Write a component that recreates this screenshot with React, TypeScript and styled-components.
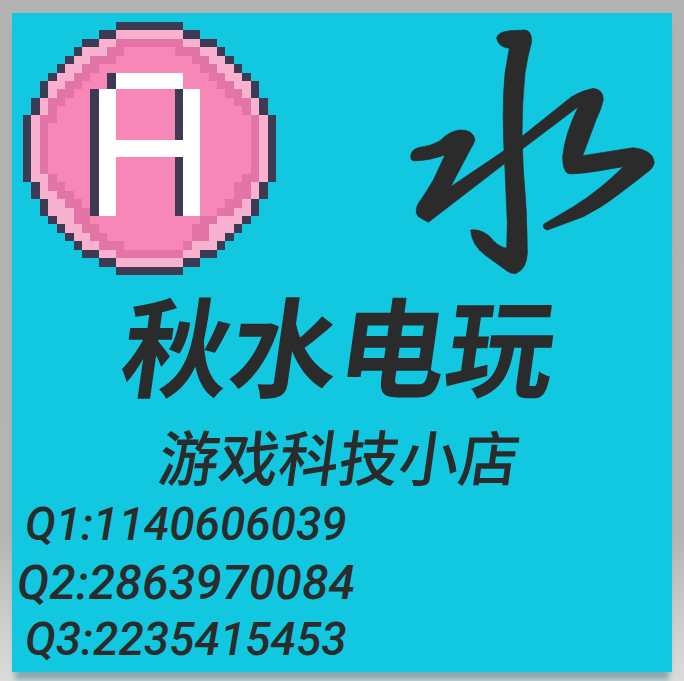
import * as React from "react";
import styled, { createGlobalStyle } from "styled-components";

const GlobalStyle = createGlobalStyle`
  html, body {
    margin: 0;
    padding: 0;
    width: 684px;
    height: 681px;
    overflow: hidden;
  }
`;

const Page = styled.div`
  width: 684px;
  height: 681px;
  box-sizing: border-box;
  padding: 13px 12px 9px;
  overflow: hidden;
  background: linear-gradient(180deg, #b3b3b3 0%, #b4b4b3 78%, #cfd0ce 92%, #dcdddb 100%);
`;

const Poster = styled.div`
  width: 660px;
  height: 659px;
  background: #12c8e0;
  color: #2b2b2b;
  overflow: hidden;
  box-shadow: 0 11px 6px -3px rgba(50, 120, 135, 0.5);
`;

const TopRow = styled.div`
  display: flex;
  justify-content: space-between;
  padding: 9px 0 0 11px;
  height: 277px;
  box-sizing: border-box;
`;

const Badge = styled.svg`
  display: block;
  width: 253px;
  height: 253px;
  shape-rendering: crispEdges;
`;

const Brush = styled.svg`
  display: block;
  width: 294px;
  height: 290px;
  margin: -12px -12px 0 0;
  flex: none;
`;

const Title = styled.h1`
  margin: 0;
  font-family: "Noto Sans CJK SC", sans-serif;
  font-size: 108px;
  font-weight: 700;
  line-height: 104px;
  text-align: center;
  padding-right: 4px;
  white-space: nowrap;
  transform: skewX(-8deg);
`;

const Subtitle = styled.h2`
  margin: 26px 0 0;
  font-family: "Noto Sans CJK SC", sans-serif;
  font-size: 60px;
  font-weight: 500;
  line-height: 70px;
  text-align: center;
  padding-right: 4px;
  white-space: nowrap;
  transform: skewX(-8deg);
`;

const Contacts = styled.div`
  display: flex;
  flex-direction: column;
  margin-top: 6px;
`;

const Contact = styled.div<{ $indent: number; $wide?: boolean }>`
  margin-left: ${(p) => p.$indent}px;
  font-family: Roboto, "Liberation Sans", sans-serif;
  font-size: ${(p) => (p.$wide ? 48 : 46)}px;
  font-style: italic;
  font-weight: 500;
  line-height: 57.5px;
  letter-spacing: ${(p) => (p.$wide ? 0.2 : 0)}px;
  white-space: nowrap;
`;

const PIXELS: string[] = [
  "...........dddddddd...........",
  ".........ddlllllllldd.........",
  ".......ddllmmmmmmmmlldd.......",
  "......dlllmmppppppmmmlld......",
  ".....dllmmmpppppppppmmlld.....",
  "....dllmmppppppppppppmmlld....",
  "...dllmmppdwwwwwwwwpppmmlld...",
  "..dllmmpppdwwwwwwwwppppmmlld..",
  "..dlmmppdwwpppppppdwwpppmmld..",
  ".dlmmpppdwwpppppppdwwppppmmld.",
  ".dlmppppdwwpppppppdwwpppppmld.",
  "dlmmppppdwwpppppppdwwppppppmld",
  "dlmpppppdwwpppppppdwwppppppmld",
  "dlmpppppdwwpppppppdwwppppppmld",
  "dlmpppppdwwwwwwwwwwwwppppppmld",
  "dlmpppppdwwwwwwwwwwwwppppppmld",
  "dlmpppppdwwpppppppdwwppppppmld",
  "dlmpppppdwwpppppppdwwppppppmld",
  "dllmppppdwwpppppppdwwpppppmmld",
  ".dlmmpppdwwpppppppdwwppppmmld.",
  ".dllmmppdwwpppppppdwwppppmmld.",
  "..dllmmpdwwpppppppdwwpppmmld..",
  "..dlllmmdwwpppppppdwwppmmlld..",
  "...dllmmpppppppppppppmmllld...",
  "....dllmmpppppppppppmmllld....",
  ".....dllmmppppppppppmmlld.....",
  "......dllmmmpppppppmllld......",
  ".......ddllmmmmmmmmlldd.......",
  ".........ddlllllllldd.........",
  "...........dddddddd...........",
];

const PIXEL_COLORS: Record<string, string> = {
  d: "#3d3a54",
  l: "#f8b1cf",
  m: "#e274a6",
  p: "#f687b6",
  w: "#ffffff",
};

const PixelBadge: React.FC = () => (
  <Badge viewBox="0 0 30 30">
    {PIXELS.flatMap((row, y) =>
      row.split("").map((c, x) =>
        c === "." ? null : (
          <rect key={`${x}-${y}`} x={x} y={y} width={1} height={1} fill={PIXEL_COLORS[c]} />
        )
      )
    )}
  </Badge>
);

// brush character traced from the picture
const BrushMark: React.FC = () => (
  <Brush viewBox="0 0 882 870" fill="#2b2b2b" stroke="#2b2b2b" strokeWidth={2} strokeLinejoin="round">
    <path d="M320 85 Q322 66 360 62 L405 60 Q425 62 425 95 Q412 140 405 190 Q396 280 396 380 L400 480 Q412 610 412 730 Q410 775 380 790 Q362 794 340 775 L285 735 Q245 705 242 660 Q270 655 300 680 Q320 708 350 715 L352 640 L345 480 Q334 300 345 190 L358 115 Q325 112 320 85 Z" />
    <path d="M62 440 Q62 418 90 412 Q125 408 150 392 Q180 362 210 360 Q250 358 255 390 Q250 405 240 420 L182 530 L345 420 L545 260 Q580 240 610 235 Q640 240 640 268 Q635 295 620 325 L578 437 L730 413 Q790 420 793 458 Q790 475 770 488 Q730 520 690 550 Q640 590 580 620 L472 660 Q455 655 462 642 L550 590 Q630 540 700 470 L630 482 Q580 490 540 492 Q518 490 518 440 Q525 370 565 290 L400 415 L345 460 L115 637 L85 620 Q72 605 85 580 Q100 560 130 510 L165 435 Q120 452 72 453 Q62 452 62 440 Z" />
  </Brush>
);

export default function App() {
  return (
    <Page>
      <GlobalStyle />
      <Poster>
        <TopRow>
          <PixelBadge />
          <BrushMark />
        </TopRow>
        <Title>秋水电玩</Title>
        <Subtitle>游戏科技小店</Subtitle>
        <Contacts>
          <Contact $indent={13}>Q1:1140606039</Contact>
          <Contact $indent={5} $wide>Q2:2863970084</Contact>
          <Contact $indent={13}>Q3:2235415453</Contact>
        </Contacts>
      </Poster>
    </Page>
  );
}
